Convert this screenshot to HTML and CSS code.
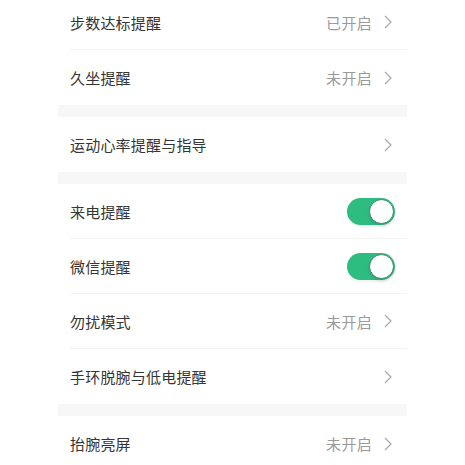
FILE: index.html
```html
<!DOCTYPE html>
<html lang="zh">
<head>
<meta charset="utf-8">
<link rel="stylesheet" href="styles.css">
</head>
<body>
<div class="page">
  <div class="group">
    <div class="row"><span class="label">步数达标提醒</span><span class="value">已开启</span><svg class="chev" viewBox="0 0 8 14"><path d="M1 1 L7 7 L1 13"/></svg></div>
    <div class="row last"><span class="label">久坐提醒</span><span class="value">未开启</span><svg class="chev" viewBox="0 0 8 14"><path d="M1 1 L7 7 L1 13"/></svg></div>
  </div>
  <div class="gap"></div>
  <div class="group">
    <div class="row last"><span class="label">运动心率提醒与指导</span><svg class="chev" viewBox="0 0 8 14"><path d="M1 1 L7 7 L1 13"/></svg></div>
  </div>
  <div class="gap"></div>
  <div class="group">
    <div class="row tog"><span class="label">来电提醒</span><span class="switch on"><span class="knob"></span></span></div>
    <div class="row tog"><span class="label">微信提醒</span><span class="switch on"><span class="knob"></span></span></div>
    <div class="row"><span class="label">勿扰模式</span><span class="value">未开启</span><svg class="chev" viewBox="0 0 8 14"><path d="M1 1 L7 7 L1 13"/></svg></div>
    <div class="row last"><span class="label">手环脱腕与低电提醒</span><svg class="chev" viewBox="0 0 8 14"><path d="M1 1 L7 7 L1 13"/></svg></div>
  </div>
  <div class="gap"></div>
  <div class="group">
    <div class="row last"><span class="label">抬腕亮屏</span><span class="value">未开启</span><svg class="chev" viewBox="0 0 8 14"><path d="M1 1 L7 7 L1 13"/></svg></div>
  </div>
</div>
</body>
</html>
```

FILE: styles.css
```css
html, body {
  margin: 0;
  padding: 0;
  background: #ffffff;
  font-family: "Noto Sans CJK SC", "Noto Sans", sans-serif;
}
.page {
  width: 349px;
  margin-left: 58px;
  margin-top: -5px;
}
.group {
  background: #ffffff;
}
.gap {
  height: 12px;
  background: #f7f7f7;
}
.row {
  height: 55px;
  box-sizing: border-box;
  margin-left: 12px;
  padding-right: 15px;
  display: flex;
  align-items: center;
  border-bottom: 1px solid #f3f3f3;
}
.row.last {
  border-bottom: none;
}
.row.tog {
  padding-right: 12px;
}
.label {
  flex: 1;
  font-size: 15px;
  color: #353535;
  letter-spacing: 0.2px;
}
.value {
  font-size: 15px;
  color: #9a9a9a;
  margin-right: 12px;
  letter-spacing: 0.3px;
}
.chev {
  width: 8px;
  height: 14px;
  fill: none;
  stroke: #a8a8a8;
  stroke-width: 1.2;
}
.switch {
  width: 48px;
  height: 27px;
  border-radius: 14px;
  background: #2dbd80;
  display: flex;
  align-items: center;
  justify-content: flex-end;
  padding: 0 1px;
  box-sizing: border-box;
  box-shadow: 0 2px 3px rgba(0,0,0,0.06);
}
.knob {
  width: 25px;
  height: 25px;
  border-radius: 50%;
  background: #ffffff;
  box-sizing: border-box;
  border: 1.5px solid #3c8a68;
  box-shadow: 0 2px 3px rgba(0,0,0,0.12);
}
```
